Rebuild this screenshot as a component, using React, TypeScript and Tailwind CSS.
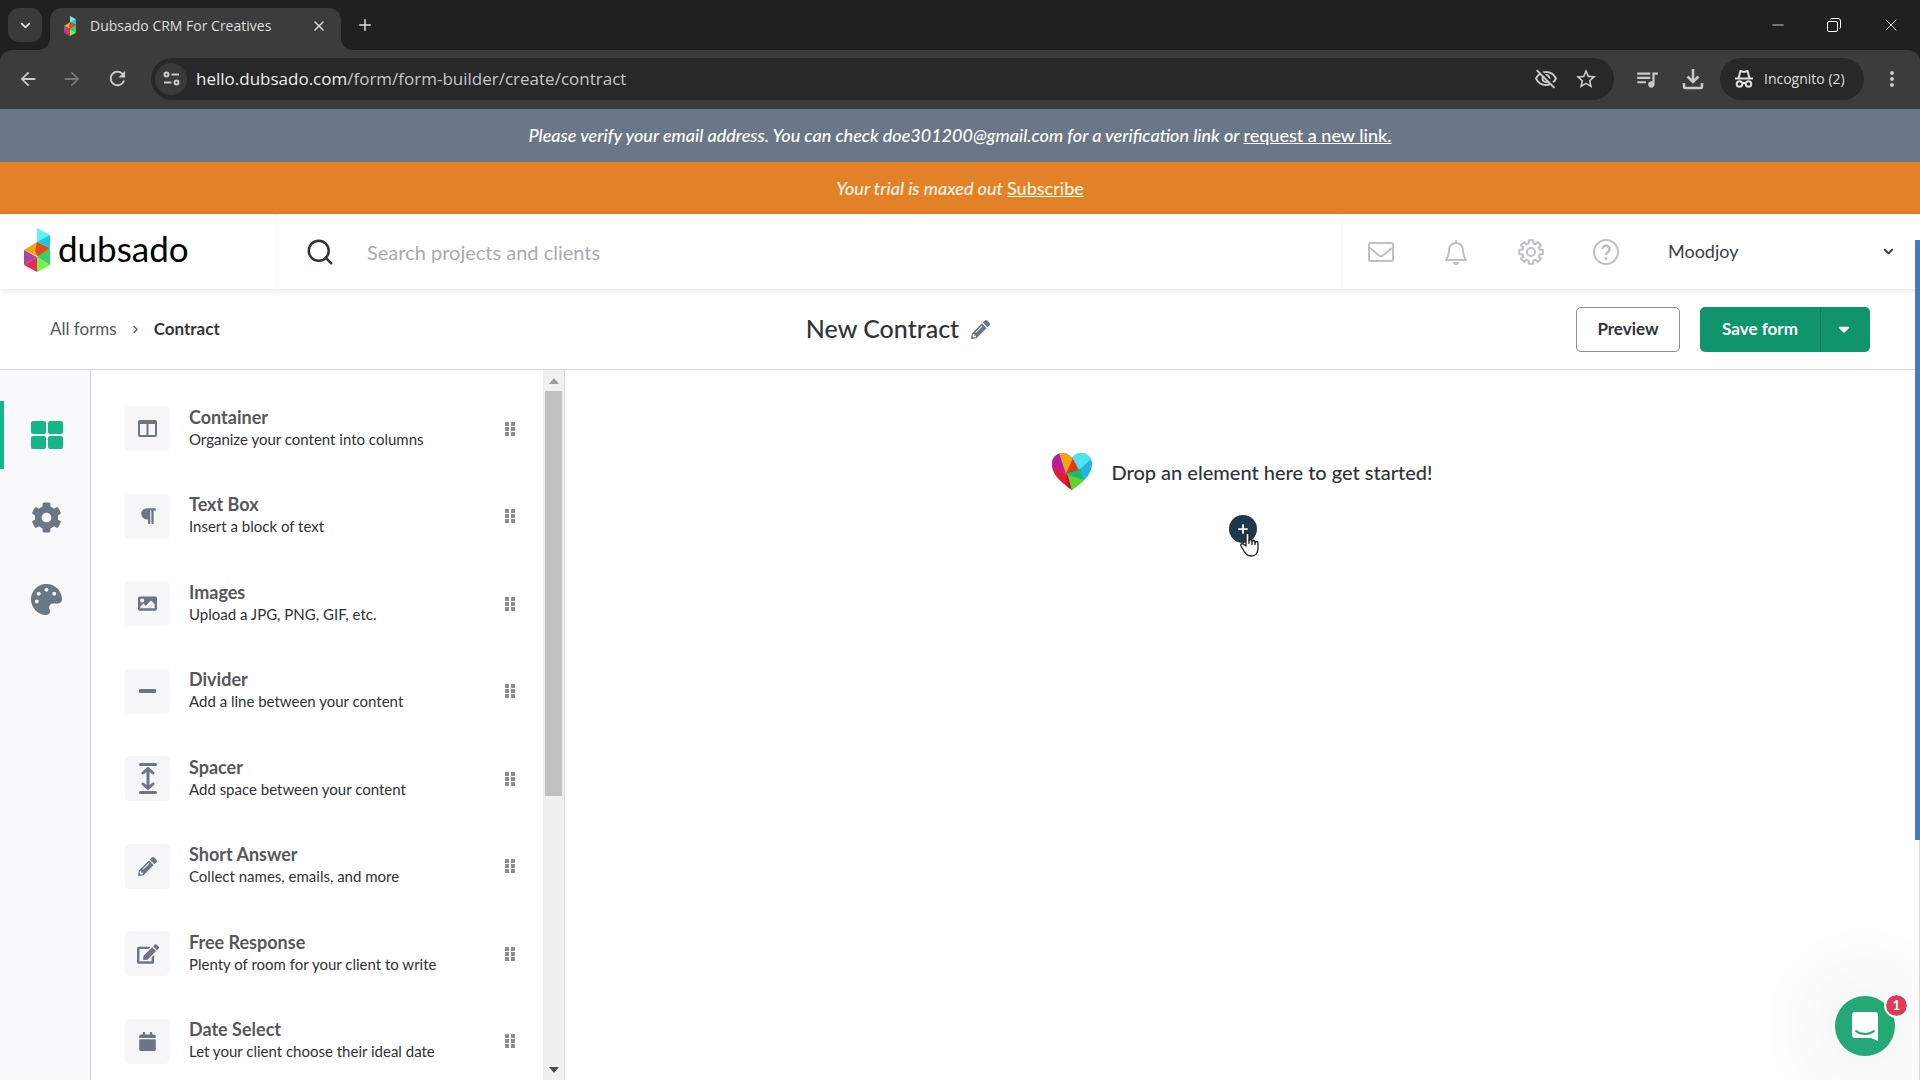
import { useState } from "react";
import type { ReactNode } from "react";
import {
  MdArrowBack,
  MdArrowForward,
  MdMoreVert,
  MdOutlineVisibilityOff,
  MdQueueMusic,
  MdRefresh,
  MdStarBorder
} from "react-icons/md";
import {
  FaCalendar,
  FaCaretDown,
  FaCog,
  FaEdit,
  FaImage,
  FaPalette,
  FaParagraph,
  FaPencilAlt
} from "react-icons/fa";
import { ChevronDown, ChevronRight, Minus, Plus, Search, X } from "lucide-react";

type FormElement = {
  name: string;
  description: string;
  icon: ReactNode;
};

const ELEMENTS: FormElement[] = [
  { name: "Container", description: "Organize your content into columns", icon: <ColumnsIcon /> },
  { name: "Text Box", description: "Insert a block of text", icon: <FaParagraph size={18} /> },
  { name: "Images", description: "Upload a JPG, PNG, GIF, etc.", icon: <FaImage size={19} /> },
  { name: "Divider", description: "Add a line between your content", icon: <DividerIcon /> },
  { name: "Spacer", description: "Add space between your content", icon: <SpacerIcon /> },
  { name: "Short Answer", description: "Collect names, emails, and more", icon: <FaPencilAlt size={19} /> },
  { name: "Free Response", description: "Plenty of room for your client to write", icon: <FaEdit size={22} /> },
  { name: "Date Select", description: "Let your client choose their ideal date", icon: <FaCalendar size={19} /> }
];

export default function App() {
  return (
    <div className="flex h-screen min-h-[720px] flex-col overflow-hidden bg-white font-['Lato','Open_Sans',sans-serif] text-[#2f3437]">
      <BrowserChrome />
      <Banners />
      <div className="relative flex min-h-0 flex-1 flex-col">
        <TopBar />
        <FormHeader />
        <main className="flex min-h-0 flex-1">
          <Rail />
          <ElementPanel />
          <Canvas />
        </main>
        {/* page scroll indicator */}
        <div className="absolute top-[26px] right-0 z-20 h-[600px] w-[5px] bg-[#437ac4]" />
        <div className="absolute top-[626px] right-0 bottom-0 w-px bg-[#d9dbe2]" />
        <Messenger />
      </div>
    </div>
  );
}

function BrowserChrome() {
  return (
    <header className="shrink-0 bg-[#202020] font-['Open_Sans','Noto_Sans',sans-serif] text-[#dedede]">
      <div className="flex h-[50px] items-center pl-2">
        <button aria-label="Search tabs" className="grid h-[34px] w-[34px] place-items-center rounded-[11px] bg-[#3a3a3a]">
          <ChevronDown size={15} strokeWidth={3} />
        </button>
        <div className="relative ml-2 flex h-[42px] w-[291px] items-center self-end rounded-t-xl bg-[#3c3c3c] pr-3 pb-1.5 pl-[14px]">
          <TabCurve className="absolute bottom-0 -left-3" />
          <TabCurve className="absolute -right-3 bottom-0 -scale-x-100" />
          <GemLogo className="h-5 w-3" />
          <span className="ml-[14px] flex-1 text-sm whitespace-nowrap">Dubsado CRM For Creatives</span>
          <button aria-label="Close tab" className="grid h-5 w-5 place-items-center">
            <X size={16} strokeWidth={2} />
          </button>
        </div>
        <button aria-label="New tab" className="ml-[10px] grid h-7 w-7 place-items-center">
          <Plus size={18} strokeWidth={2} />
        </button>
        <div className="ml-auto flex items-center text-white">
          <button aria-label="Minimize" className="grid h-10 w-14 place-items-center">
            <Minus size={18} strokeWidth={1} />
          </button>
          <button aria-label="Restore" className="grid h-10 w-14 place-items-center">
            <RestoreIcon />
          </button>
          <button aria-label="Close window" className="grid h-10 w-[58px] place-items-center">
            <X size={20} strokeWidth={1} />
          </button>
        </div>
      </div>

      <div className="flex h-[59px] items-center rounded-t-xl bg-[#3c3c3c] pr-4 pb-0.5 pl-4 text-[#c9c9c9]">
        <button aria-label="Back" className="grid h-6 w-6 place-items-center">
          <MdArrowBack size={22} />
        </button>
        <button aria-label="Forward" className="ml-5 grid h-6 w-6 place-items-center text-[#757575]">
          <MdArrowForward size={22} />
        </button>
        <button aria-label="Reload" className="ml-[21px] grid h-6 w-6 place-items-center">
          <MdRefresh size={23} />
        </button>
        <div className="ml-[22px] flex h-[42px] flex-1 items-center rounded-full bg-[#282828] pr-4 pl-1">
          <button aria-label="Site information" className="grid h-8 w-8 place-items-center rounded-full bg-[#3a3a3a]">
            <TuneIcon />
          </button>
          <div className="ml-[9px] flex-1 text-[17px] whitespace-nowrap text-[#c6c6c6]">
            <span className="text-[#ececec]">hello.dubsado.com</span>/form/form-builder/create/contract
          </div>
          <button aria-label="Third-party cookies blocked">
            <MdOutlineVisibilityOff size={24} />
          </button>
          <button aria-label="Bookmark this tab" className="ml-4">
            <MdStarBorder size={24} />
          </button>
        </div>
        <button aria-label="Media controls" className="ml-5">
          <MdQueueMusic size={26} />
        </button>
        <button aria-label="Downloads" className="ml-[22px]">
          <DownloadIcon />
        </button>
        <button className="ml-4 flex h-[42px] w-[144px] items-center gap-[10px] rounded-full bg-[#282828] pl-[14px] text-sm text-[#dedede]">
          <IncognitoIcon />
          Incognito (2)
        </button>
        <button aria-label="Menu" className="ml-4">
          <MdMoreVert size={24} />
        </button>
      </div>
    </header>
  );
}

function Banners() {
  return (
    <div className="shrink-0 text-center text-[18px] font-medium text-white italic">
      <p className="flex h-[53px] items-center justify-center gap-1 bg-[#6b7787]">
        Please verify your email address. You can check doe301200@gmail.com for a verification link or
        <a href="#verify" className="not-italic underline">request a new link.</a>
      </p>
      <p className="flex h-[52px] items-center justify-center gap-1 bg-[#e38129] text-[#fff6e6]">
        Your trial is maxed out
        <a href="#subscribe" className="not-italic underline">Subscribe</a>
      </p>
    </div>
  );
}

function TopBar() {
  return (
    <div className="relative z-10 flex h-[75px] shrink-0 items-stretch bg-white shadow-[0_2px_6px_rgba(0,0,0,0.09)]">
      <a href="#home" className="flex w-[277px] shrink-0 items-center gap-2 border-r border-[#f8f8f8] pb-1 pl-6 text-black">
        <GemLogo className="h-11 w-[26px]" />
        <span className="pb-1 text-[35px] leading-10">dubsado</span>
      </a>
      <label className="flex flex-1 items-center gap-8 pl-7">
        <Search size={30} strokeWidth={2} className="shrink-0 text-[#2b3440]" aria-label="Search" />
        <input
          type="search"
          placeholder="Search projects and clients"
          className="w-full bg-transparent text-[20px] outline-none placeholder:text-[#ababab]"
        />
      </label>
      <nav className="flex items-center gap-[47px] border-l border-[#f8f8f8] pl-[25px] text-[#bdc1c4]">
        <button aria-label="Inbox"><MailIcon /></button>
        <button aria-label="Notifications"><BellIcon /></button>
        <button aria-label="Settings"><GearOutlineIcon /></button>
        <button aria-label="Help"><HelpIcon /></button>
      </nav>
      <div className="relative mr-6 ml-12 flex w-[228px] items-center">
        <select aria-label="Brand" className="w-full appearance-none bg-transparent text-[18px] text-[#3b3f42] outline-none">
          <option>Moodjoy</option>
        </select>
        <ChevronDown size={15} strokeWidth={3} className="pointer-events-none absolute right-0 text-[#333]" />
      </div>
    </div>
  );
}

function FormHeader() {
  return (
    <div className="grid h-[81px] shrink-0 grid-cols-[1fr_auto_1fr] items-center border-b border-[#d6d8da] bg-[#fefefe] px-[50px]">
      <nav aria-label="Breadcrumb" className="flex items-center text-[17px]">
        <a href="#forms" className="text-[#55595c]">All forms</a>
        <ChevronRight size={13} strokeWidth={2} className="mx-3 text-[#555]" />
        <span className="font-bold text-[#333739]">Contract</span>
      </nav>
      <h1 className="flex items-center gap-3 pr-[124px] text-[25px] font-medium">
        New Contract
        <button aria-label="Rename form" className="text-[#6b7785]">
          <FaPencilAlt size={19} />
        </button>
      </h1>
      <div className="flex h-[45px] justify-end">
        <button className="w-[104px] rounded-[5px] border border-[#8d9093] bg-white text-[17px] font-bold">Preview</button>
        <button className="ml-5 w-[120px] rounded-l-[5px] bg-[#0f946b] text-[17px] font-bold text-white">Save form</button>
        <button aria-label="More save options" className="grid w-[50px] place-items-center rounded-r-[5px] border-l border-[#0a7d59] bg-[#0f946b] pr-1 text-white">
          <FaCaretDown size={18} />
        </button>
      </div>
    </div>
  );
}

function Rail() {
  const [active, setActive] = useState("elements");
  const items = [
    { id: "elements", label: "Elements", icon: <FourTilesIcon /> },
    { id: "settings", label: "Form settings", icon: <FaCog size={31} /> },
    { id: "style", label: "Styling", icon: <FaPalette size={31} /> }
  ];

  return (
    <nav className="flex w-[91px] shrink-0 flex-col gap-[14px] border-r border-[#cdd0da] bg-[#f9f9fc] pt-[31px]">
      {items.map((item) => (
        <button
          key={item.id}
          aria-label={item.label}
          onClick={() => setActive(item.id)}
          className={`flex h-[68px] items-center border-l-4 pl-[27px] ${
            active === item.id ? "border-[#14b789] text-[#14b789]" : "border-transparent text-[#6b7785]"
          }`}
        >
          {item.icon}
        </button>
      ))}
    </nav>
  );
}

function ElementPanel() {
  return (
    <section className="flex w-[474px] shrink-0 border-r border-[#d6d8dd]">
      <ul className="flex flex-1 flex-col justify-between pt-9 pr-[27px] pb-4 pl-[34px]">
        {ELEMENTS.map((element) => (
          <li key={element.name} className="flex h-[45px] items-center">
            <span className="grid h-[45px] w-[45px] shrink-0 place-items-center rounded-[5px] bg-[#f6f6f9] text-[#6d7585]">
              {element.icon}
            </span>
            <div className="ml-[19px] flex-1 pb-0.5">
              <h2 className="text-[18px] leading-[22px] font-bold text-[#55585a]">{element.name}</h2>
              <p className="text-[15px] leading-[22px] text-[#2f3234]">{element.description}</p>
            </div>
            <DragHandle />
          </li>
        ))}
      </ul>
      <Scrollbar />
    </section>
  );
}

function Scrollbar() {
  return (
    <div aria-hidden className="flex w-[21px] flex-col items-center bg-[#f0f0f0]">
      <span className="grid h-[21px] place-items-center text-[#9c9c9c]">
        <svg width="10" height="6" viewBox="0 0 10 6" fill="currentColor"><path d="M5 0l5 6H0z" /></svg>
      </span>
      <span className="w-[17px] flex-[406] bg-[#c0c0c0]" />
      <span className="flex-[263]" />
      <span className="grid h-[21px] place-items-center text-[#4c4c4c]">
        <svg width="10" height="6" viewBox="0 0 10 6" fill="currentColor"><path d="M0 0h10L5 6z" /></svg>
      </span>
    </div>
  );
}

function Canvas() {
  return (
    <section className="flex flex-1 flex-col items-center bg-[#fefefe] pt-[82px]">
      <div className="flex h-10 items-center gap-[19px]">
        <HeartLogo />
        <p className="text-[20px] font-medium">Drop an element here to get started!</p>
      </div>
      <div className="relative mt-[23px]">
        <button aria-label="Add element" className="grid h-7 w-7 place-items-center rounded-full bg-[#20364b] text-white">
          <Plus size={14} strokeWidth={3} />
        </button>
        <HandCursor className="absolute top-[17px] left-[11px]" />
      </div>
    </section>
  );
}

function Messenger() {
  return (
    <div className="absolute right-[25px] bottom-6 z-20">
      <button
        aria-label="Open messenger"
        className="grid h-[60px] w-[60px] place-items-center rounded-full bg-[#25a877] shadow-[0_0_70px_30px_rgba(0,0,0,0.04)]"
      >
        <svg width="28" height="31" viewBox="0 0 28 31">
          <path d="M4 1h20a3 3 0 0 1 3 3v26l-7-3H4a3 3 0 0 1-3-3V4a3 3 0 0 1 3-3z" fill="#fff" />
          <path d="M5 20c5 4 13 4 18 0" fill="none" stroke="#25a877" strokeWidth="2" strokeLinecap="round" />
        </svg>
      </button>
      <span className="absolute -top-[1px] -right-[12px] grid h-[21px] w-[21px] place-items-center rounded-full bg-[#df3b57] text-[13px] font-bold text-white outline-2 outline-white">
        1
      </span>
    </div>
  );
}

/* ---------- drawings ---------- */

function GemLogo({ className }: { className: string }) {
  return (
    <svg viewBox="0 0 26 44" className={className} preserveAspectRatio="none" aria-hidden>
      <path d="M13 0l13 7-13 9z" fill="#5df3f5" />
      <path d="M26 7v13l-13-6z" fill="#19c7e2" />
      <path d="M13 14l12 8-12 6L0 22z" fill="#f4a60d" />
      <path d="M13 14l13 6-12 9-3-6z" fill="#dc4c1c" />
      <path d="M0 22l13 7-13 8z" fill="#a8479f" />
      <path d="M13 29v15L0 37z" fill="#e52f55" />
      <path d="M26 20v17l-13-8z" fill="#37d06c" />
      <path d="M13 29l13 8-13 7z" fill="#74f24b" />
    </svg>
  );
}

function HeartLogo() {
  return (
    <svg width="40" height="38" viewBox="0 0 40 38" aria-hidden>
      <defs>
        <clipPath id="heart">
          <path d="M20 37C12 31 0 23 0 11 0 4 5 0 11 0c4 0 7 2 9 5 2-3 5-5 9-5 6 0 11 4 11 11 0 12-12 20-20 26z" />
        </clipPath>
      </defs>
      <g clipPath="url(#heart)">
        <path d="M0 0h40v38H0z" fill="#24b6df" />
        <path d="M0 0h8l7 21L0 14z" fill="#b51d9d" />
        <path d="M7 0h15v7l-8 14z" fill="#f6a313" />
        <path d="M21 5l7 12-14 4z" fill="#dd3a1c" />
        <path d="M21 0h19v5L27 17 21 6z" fill="#51e3f0" />
        <path d="M14 21l15-5 2 11z" fill="#19b97b" />
        <path d="M14 21l20 7-14 10z" fill="#62d421" />
        <path d="M0 13l14 8 6 17H0z" fill="#ec1438" />
        <path d="M14 21l2 2 4 15-4-4z" fill="#a71c2d" />
      </g>
    </svg>
  );
}

function TabCurve({ className }: { className: string }) {
  return (
    <svg width="12" height="12" viewBox="0 0 12 12" className={className} aria-hidden>
      <path d="M12 0v12H0C7 12 12 7 12 0z" fill="#3c3c3c" />
    </svg>
  );
}

function RestoreIcon() {
  return (
    <svg width="14" height="14" viewBox="0 0 14 14" fill="none" stroke="currentColor">
      <rect x="0.5" y="3.5" width="10" height="10" rx="1.5" />
      <path d="M3.5 1.5c0-.6.4-1 1-1H11A2.5 2.5 0 0 1 13.5 3v6.5c0 .6-.4 1-1 1" />
    </svg>
  );
}

function TuneIcon() {
  return (
    <svg width="17" height="15" viewBox="0 0 17 15" fill="none" stroke="currentColor" strokeWidth="2">
      <circle cx="3.5" cy="3.5" r="2" />
      <path d="M8.5 3.5H16M1 11.5h7.5" />
      <circle cx="13.5" cy="11.5" r="2" />
    </svg>
  );
}

function DownloadIcon() {
  return (
    <svg width="22" height="22" viewBox="0 0 22 22" fill="none" stroke="currentColor" strokeWidth="2.5">
      <path d="M11 1v12M5.5 8.5L11 14l5.500-5.500M2 15v3.500A1.500 1.500 0 0 0 3.500 20h15a1.500 1.500 0 0 0 1.500-1.500V15" />
    </svg>
  );
}

function IncognitoIcon() {
  return (
    <svg width="20" height="20" viewBox="0 0 20 20" fill="none" stroke="currentColor" strokeWidth="2">
      <path d="M1 9.5h18M4.500 9l2-7 3.500 1 3.500-1 2 7" />
      <circle cx="5.5" cy="15" r="2.8" />
      <circle cx="14.5" cy="15" r="2.8" />
      <path d="M8 14.5c1.300-.8 2.700-.8 4 0" />
    </svg>
  );
}

function MailIcon() {
  return (
    <svg width="28" height="24" viewBox="0 0 28 24" fill="none" stroke="currentColor" strokeWidth="2">
      <rect x="2" y="3" width="24" height="18" rx="1.5" />
      <path d="M3 8l9 7.500c1.300 1 2.700 1 4 0L25 8" />
    </svg>
  );
}

function BellIcon() {
  return (
    <svg width="28" height="28" viewBox="0 0 28 28" fill="none" stroke="currentColor" strokeWidth="2">
      <path d="M14 2v3M4 22h20c-2-3-3-5-3-10 0-4-3-7-7-7s-7 3-7 7c0 5-1 7-3 10z" strokeLinejoin="round" />
      <path d="M11 24h6a3 3 0 0 1-6 0z" fill="currentColor" stroke="none" />
    </svg>
  );
}

// Outline of an eight-toothed gear, four points to a tooth.
const GEAR_POINTS = Array.from({ length: 8 }, (_, tooth) => {
  const at = (radius: number, degrees: number) => {
    const a = ((tooth * 45 + degrees) * Math.PI) / 180;
    return `${(14 + radius * Math.cos(a)).toFixed(2)},${(14 + radius * Math.sin(a)).toFixed(2)}`;
  };
  return [at(9, -15), at(12, -11), at(12, 11), at(9, 15)].join(" ");
}).join(" ");

function GearOutlineIcon() {
  return (
    <svg width="28" height="28" viewBox="0 0 28 28" fill="none" stroke="currentColor" strokeWidth="2" strokeLinejoin="round">
      <polygon points={GEAR_POINTS} />
      <circle cx="14" cy="14" r="4" />
    </svg>
  );
}

function HelpIcon() {
  return (
    <svg width="28" height="28" viewBox="0 0 28 28" fill="none" stroke="currentColor" strokeWidth="2">
      <circle cx="14" cy="14" r="12" />
      <path d="M10.500 11a3.500 3.500 0 1 1 5.500 3c-1.500 1-2 1.500-2 3" strokeWidth="2.500" />
      <circle cx="14" cy="20.5" r="1.6" fill="currentColor" stroke="none" />
    </svg>
  );
}

function FourTilesIcon() {
  return (
    <svg width="32" height="28" viewBox="0 0 32 28" fill="currentColor">
      <rect width="15" height="13" rx="2" />
      <rect x="17" width="15" height="13" rx="2" />
      <rect y="15" width="15" height="13" rx="2" />
      <rect x="17" y="15" width="15" height="13" rx="2" />
    </svg>
  );
}

function ColumnsIcon() {
  return (
    <svg width="19" height="17" viewBox="0 0 19 17" fill="none" stroke="currentColor" strokeWidth="2">
      <rect x="1" y="1" width="17" height="15" rx="1" />
      <path d="M1 2.500h17" strokeWidth="3" />
      <path d="M9.500 3v13" />
    </svg>
  );
}

function DividerIcon() {
  return (
    <svg width="17" height="4" viewBox="0 0 17 4">
      <rect width="17" height="4" rx="1" fill="currentColor" />
    </svg>
  );
}

function SpacerIcon() {
  return (
    <svg width="18" height="31" viewBox="0 0 18 31" fill="none" stroke="currentColor" strokeWidth="3" strokeLinecap="round">
      <path d="M1.500 1.500h15M1.500 29.500h15" />
      <path d="M9 6.500v18M4 10l5-4.500 5 4.500M4 21l5 4.500 5-4.500" strokeWidth="3" />
    </svg>
  );
}

function DragHandle() {
  return (
    <svg width="11" height="14" viewBox="0 0 11 14" fill="#8b8d90" aria-hidden>
      <path d="M0 0h4v4H0zM6 0h4v4H6zM0 5h4v4H0zM6 5h4v4H6zM0 10h4v4H0zM6 10h4v4H6z" />
    </svg>
  );
}

function HandCursor({ className }: { className: string }) {
  return (
    <svg width="19" height="25" viewBox="0 0 19 25" className={className} aria-hidden>
      <path
        d="M6 2.500a1.500 1.500 0 0 1 3 0V9a1.500 1.500 0 0 1 3 0v1a1.500 1.500 0 0 1 3 0v1a1.500 1.500 0 0 1 3 0v5c0 5-2 8-7 8-4 0-5-2-7-5l-3-5c-1-2 1-3 3-1.500L6 14z"
        fill="#fff"
        stroke="#222"
        strokeWidth="1.3"
        strokeLinejoin="round"
      />
      <path d="M9 8v4M12 9v4M15 10v3" stroke="#222" strokeWidth="1.2" />
    </svg>
  );
}
